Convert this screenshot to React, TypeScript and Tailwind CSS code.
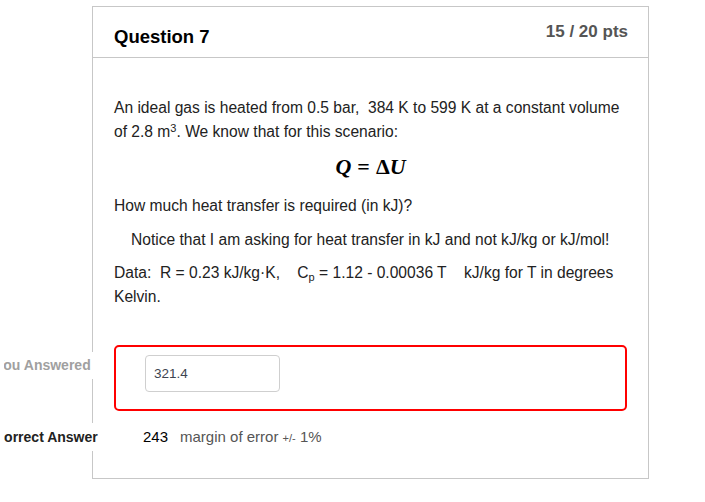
import React from 'react';

const sans = { fontFamily: '"Liberation Sans", Arial, Helvetica, sans-serif' };

export default function App() {
  return (
    <div className="relative w-[705px] h-[502px] bg-white overflow-hidden pt-[6px]" style={sans}>
      {/* question card */}
      <div className="ml-[92px] w-[557px] h-[473px] border border-[#c7c7c7] flex flex-col">
        <div className="h-[51px] border-b border-[#c7c7c7] flex items-start justify-between pl-[21px] pr-[20px]">
          <div className="text-[18.5px] font-bold text-black mt-[16px]">Question 7</div>
          <div className="text-[17px] font-bold text-[#555] mt-[12px]">15 / 20 pts</div>
        </div>

        <div className="px-[21px] pt-[38px] text-[15.6px] leading-[24px] text-[#222]">
          <p>
            An ideal gas is heated from 0.5 bar,&nbsp; 384 K to 599 K at a constant volume of 2.8 m
            <sup className="text-[11px]">3</sup>. We know that for this scenario:
          </p>
          <div
            className="mt-[11px] h-[24px] flex items-center justify-center text-[22px] font-bold text-black"
            style={{ fontFamily: '"Liberation Serif", "Times New Roman", serif' }}
          >
            <span className="italic">Q</span>
            <span className="mx-[6px]">=</span>
            <span>Δ</span>
            <span className="italic">U</span>
          </div>
          <p className="mt-[15px]">How much heat transfer is required (in kJ)?</p>
          <p className="mt-[10px] pl-[17px]">
            Notice that I am asking for heat transfer in kJ and not kJ/kg or kJ/mol!
          </p>
          <p className="mt-[9px]">
            Data:&nbsp; R = 0.23 kJ/kg·K,&nbsp;&nbsp;&nbsp; C<sub className="text-[11px]">p</sub> = 1.12 - 0.00036 T&nbsp;&nbsp;&nbsp; kJ/kg
            for T in degrees Kelvin.
          </p>

          {/* your answer */}
          <div className="mt-[36px] h-[66px] border-2 border-[#ff0000] rounded-[5px] pl-[29px] pt-[8px]">
            <div className="w-[135px] h-[37px] border border-[#cfcfcf] rounded-[4px] flex items-center pl-[8px] text-[13.5px] text-[#3d4450]">
              321.4
            </div>
          </div>

          {/* correct answer */}
          <div className="mt-[14px] h-[24px] flex items-center pl-[29px]">
            <span className="text-[15px] text-black">243</span>
            <span className="ml-[12px] text-[15px] text-[#555]">
              margin of error <span className="text-[11px]">+/-</span> 1%
            </span>
          </div>
        </div>
      </div>

      {/* answer labels over the card edge, first letter cut off */}
      <div className="absolute left-[4px] top-[352px] h-[27px] bg-white pr-[4px] flex items-center overflow-hidden text-[14px] font-bold text-[#a0a0a0]">
        <span className="ml-[-9px] whitespace-nowrap">You Answered</span>
      </div>
      <div className="absolute left-[4px] top-[423px] h-[28px] bg-white pr-[4px] flex items-center overflow-hidden text-[14px] font-bold text-[#222]">
        <span className="ml-[-10px] whitespace-nowrap">Correct Answer</span>
      </div>
    </div>
  );
}
